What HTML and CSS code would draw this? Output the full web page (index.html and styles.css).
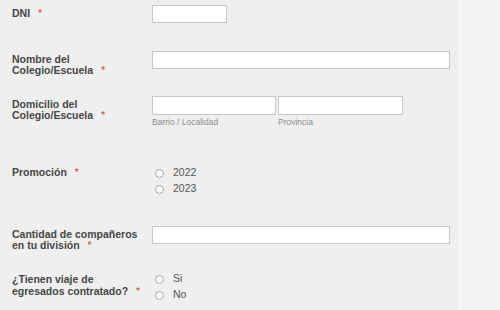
FILE: index.html
```html
<!DOCTYPE html>
<html lang="es">
<head>
<meta charset="utf-8">
<title>Formulario</title>
<link rel="stylesheet" href="styles.css">
</head>
<body>
<div class="panel">
  <form class="form">
    <label class="label" for="dni">DNI <span class="req">*</span></label>
    <div class="field"><input id="dni" class="input input-short" type="text"></div>

    <label class="label" for="colegio">Nombre del<br>Colegio/Escuela <span class="req">*</span></label>
    <div class="field"><input id="colegio" class="input input-long" type="text"></div>

    <label class="label" for="barrio">Domicilio del<br>Colegio/Escuela <span class="req">*</span></label>
    <div class="field address">
      <div class="sub">
        <input id="barrio" class="input input-half" type="text">
        <span class="sublabel">Barrio / Localidad</span>
      </div>
      <div class="sub">
        <input id="provincia" class="input input-half" type="text">
        <span class="sublabel">Provincia</span>
      </div>
    </div>

    <span class="label">Promoción <span class="req">*</span></span>
    <div class="field radios">
      <label class="radio"><input type="radio" name="promo"><span>2022</span></label>
      <label class="radio"><input type="radio" name="promo"><span>2023</span></label>
    </div>

    <label class="label" for="cantidad">Cantidad de compañeros<br>en tu división <span class="req">*</span></label>
    <div class="field"><input id="cantidad" class="input input-long" type="text"></div>

    <span class="label label-late">¿Tienen viaje de<br>egresados contratado? <span class="req">*</span></span>
    <div class="field radios">
      <label class="radio"><input type="radio" name="viaje"><span>Si</span></label>
      <label class="radio"><input type="radio" name="viaje"><span>No</span></label>
    </div>
  </form>
</div>
</body>
</html>
```
FILE: styles.css
```css
html, body {
  margin: 0;
  padding: 0;
}

body {
  background: #f4f4f4;
  font-family: "Liberation Sans", Arial, sans-serif;
  width: 500px;
  height: 310px;
  overflow: hidden;
}

.panel {
  width: 458px;
  height: 310px;
  background: #efefef;
}

.form {
  display: grid;
  grid-template-columns: 140px 1fr;
  grid-template-rows: 46px 45px 68px 62px 44px auto;
  padding: 5px 0 0 12px;
  margin: 0;
}

.label {
  font-size: 10.5px;
  font-weight: bold;
  line-height: 11.5px;
  color: #474747;
  padding-top: 2.5px;
}

.label-late {
  padding-top: 4px;
}

.req {
  color: #d04545;
  font-weight: normal;
  margin-left: 5px;
}

.field {
  display: flex;
  align-items: flex-start;
}

.input {
  box-sizing: border-box;
  height: 18px;
  margin: 0;
  padding: 0 3px;
  border: 1px solid #c8c8c8;
  background: #fff;
  font: 11px "Liberation Sans", Arial, sans-serif;
}

.input-short {
  width: 75px;
}

.input-long {
  width: 298px;
}

.address {
  gap: 2px;
}

.sub {
  display: flex;
  flex-direction: column;
}

.input-half {
  width: 124px;
  height: 19px;
}

.input-half + .sublabel {
  margin-top: 2px;
}

.sub + .sub .input-half {
  width: 125px;
}

.sublabel {
  font-size: 8.5px;
  color: #8e8e8e;
}

.radios {
  flex-direction: column;
}

.radio {
  display: flex;
  align-items: center;
  height: 16px;
  font-size: 10.5px;
  color: #555;
}

.radio input {
  appearance: none;
  -webkit-appearance: none;
  box-sizing: border-box;
  width: 9px;
  height: 9px;
  margin: 2px 9px 0 3px;
  border: 1px solid #a8a8a8;
  border-radius: 50%;
  background: #f8f8f8;
}
```
